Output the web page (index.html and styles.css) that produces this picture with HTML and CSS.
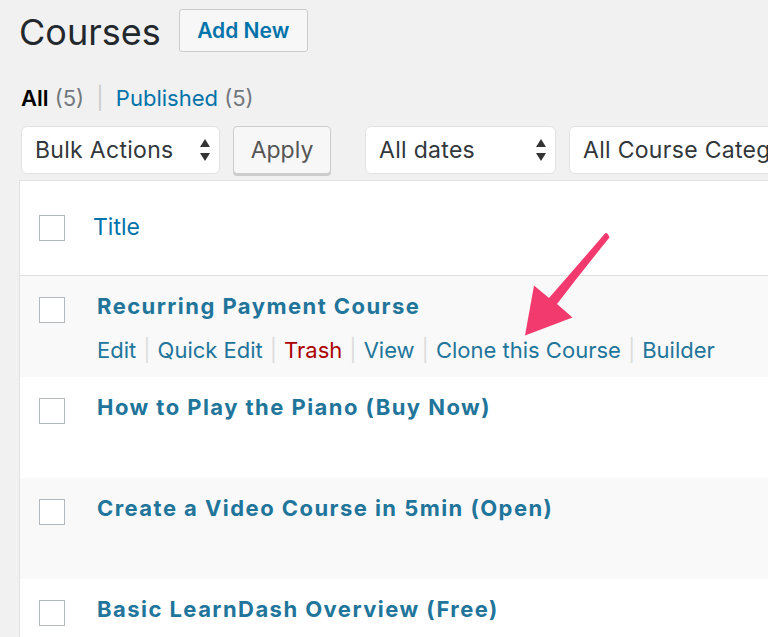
FILE: index.html
```html
<!DOCTYPE html>
<html>
<head>
<meta charset="utf-8">
<link rel="stylesheet" href="styles.css">
</head>
<body>
<div class="wrap">
  <div class="head">
    <h1 class="title">Courses</h1>
    <a class="add-new">Add New</a>
  </div>
  <div class="subsub">
    <span class="cur">All</span> <span class="count">(5)</span> <span class="sep">|</span> <a class="link">Published</a> <span class="count">(5)</span>
  </div>
  <div class="tablenav">
    <div class="select bulk">Bulk Actions<span class="arrows"><svg width="12" height="26" viewBox="0 0 12 26"><path d="M6 2 L11 10 H1 Z M6 24 L11 16 H1 Z" fill="#333"/></svg></span></div>
    <div class="btn apply">Apply</div>
    <div class="select dates">All dates<span class="arrows"><svg width="12" height="26" viewBox="0 0 12 26"><path d="M6 2 L11 10 H1 Z M6 24 L11 16 H1 Z" fill="#333"/></svg></span></div>
    <div class="select cats">All Course Categ</div>
  </div>
  <div class="table">
    <div class="row header">
      <span class="cb"></span>
      <a class="col-title">Title</a>
    </div>
    <div class="row alt">
      <span class="cb"></span>
      <div class="cell">
        <a class="row-title">Recurring Payment Course</a>
        <div class="actions">
          <a>Edit</a><span class="bar">|</span><a>Quick Edit</a><span class="bar">|</span><a class="trash">Trash</a><span class="bar">|</span><a>View</a><span class="bar">|</span><a>Clone this Course</a><span class="bar">|</span><a>Builder</a>
        </div>
      </div>
    </div>
    <div class="row">
      <span class="cb"></span>
      <div class="cell"><a class="row-title">How to Play the Piano (Buy Now)</a></div>
    </div>
    <div class="row alt">
      <span class="cb"></span>
      <div class="cell"><a class="row-title">Create a Video Course in 5min (Open)</a></div>
    </div>
    <div class="row last">
      <span class="cb"></span>
      <div class="cell"><a class="row-title">Basic LearnDash Overview (Free)</a></div>
    </div>
  </div>
</div>
<svg class="pointer" width="768" height="637" viewBox="0 0 768 637">
  <path d="M604.5 234 Q607 231 609.5 237.5 Q583 270 557 304 L572.5 317.5 L525 335.5 L534 285.5 L549 298 Q577 266 604.5 234 Z" fill="#f23a6e"/>
</svg>
</body>
</html>
```
FILE: styles.css
```css
html, body {
  margin: 0;
  padding: 0;
  background: #f1f1f1;
  font-family: Inter, "Liberation Sans", Arial, sans-serif;
  color: #23282d;
  overflow: hidden;
  height: 637px;
}
.wrap {
  padding-left: 19px;
  width: 749px;
  overflow: hidden;
  height: 637px;
}
.head {
  display: flex;
  align-items: center;
  height: 61px;
}
.title {
  margin: 0;
  font-size: 36px;
  font-weight: 400;
  color: #23282d;
  line-height: 1;
  position: relative;
  top: 1px;
}
.add-new {
  margin-left: 18px;
  height: 41px;
  width: 127px;
  border: 1px solid #ccc;
  border-radius: 3px;
  background: #f7f7f7;
  color: #0073aa;
  font-weight: 600;
  font-size: 21px;
  display: flex;
  align-items: center;
  justify-content: center;
  box-sizing: content-box;
}
.subsub {
  margin-top: 24px;
  padding-left: 2px;
  font-size: 22px;
  color: #555d66;
  height: 26px;
  line-height: 26px;
}
.subsub .cur { color: #000; font-weight: 600; }
.subsub .count { color: #72777c; }
.subsub .sep { color: #ccc; margin: 0 6px; }
.subsub .link { color: #0073aa; }
.tablenav {
  margin-top: 15px;
  padding-left: 2px;
  display: flex;
  height: 48px;
  gap: 13px;
}
.select {
  box-sizing: border-box;
  height: 48px;
  background: #fff;
  border: 1px solid #e2e2e2;
  border-radius: 6px;
  font-size: 23px;
  color: #32373c;
  display: flex;
  align-items: center;
  padding-left: 13px;
  padding-right: 8px;
  justify-content: space-between;
  white-space: nowrap;
  overflow: hidden;
  flex: none;
  letter-spacing: 0.3px;
}
.arrows { display: flex; align-items: center; }
.bulk { width: 199px; }
.dates { width: 191px; margin-left: 21px; }
.cats { width: 260px; }
.btn {
  box-sizing: border-box;
  width: 98px;
  height: 48px;
  border: 1px solid #ccc;
  border-radius: 4px;
  background: #f7f7f7;
  box-shadow: 0 2px 0 #ccc;
  font-size: 23px;
  color: #555;
  display: flex;
  align-items: center;
  justify-content: center;
  flex: none;
}
.table {
  margin-top: 6px;
  background: #fff;
  border-top: 1px solid #e1e1e1;
  border-left: 1px solid #e1e1e1;
}
.row {
  display: flex;
  align-items: flex-start;
  height: 101px;
  box-sizing: border-box;
  padding-left: 19px;
}
.row.last { height: 60px; }
.row.header {
  height: 95px;
  align-items: center;
  border-bottom: 1px solid #e1e1e1;
}
.row.alt { background: #f9f9f9; }
.cb {
  width: 26px;
  height: 26px;
  border: 1px solid #b4b9be;
  background: #fff;
  box-sizing: border-box;
  flex: none;
}
.row:not(.header) .cb { margin-top: 21px; }
.col-title {
  margin-left: 28px;
  font-size: 23px;
  color: #0073aa;
  position: relative;
  top: -1px;
}
.cell {
  margin-left: 32px;
  padding-top: 16px;
}
.row-title {
  font-size: 22px;
  font-weight: 700;
  letter-spacing: 1.45px;
  color: #21759b;
  line-height: 28px;
  display: block;
  white-space: nowrap;
}
.actions {
  margin-top: 16px;
  font-size: 22px;
  line-height: 28px;
  white-space: nowrap;
}
.actions a { color: #21759b; }
.actions a.trash { color: #a00; }
.actions .bar { color: #ddd; margin: 0 7px; }
.pointer {
  position: absolute;
  left: 0;
  top: 0;
  pointer-events: none;
}
```
